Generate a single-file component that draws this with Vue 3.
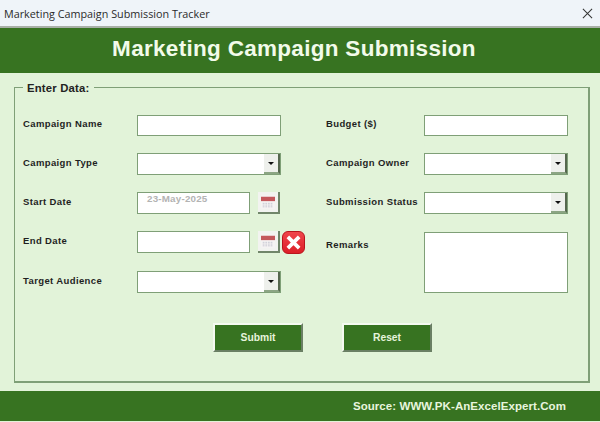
<script setup>
// Marketing campaign submission form
const leftRows = [
  { label: 'Campaign Name', type: 'text' },
  { label: 'Campaign Type', type: 'select' },
  { label: 'Start Date', type: 'date', value: '23-May-2025' },
  { label: 'End Date', type: 'date', clear: true },
  { label: 'Target Audience', type: 'select' }
]
const rightRows = [
  { label: 'Budget ($)', type: 'text' },
  { label: 'Campaign Owner', type: 'select' },
  { label: 'Submission Status', type: 'select' }
]
</script>

<template>
  <div class="window">
    <div class="titlebar">
      <span class="title-text">Marketing Campaign Submission Tracker</span>
      <svg class="close-icon" viewBox="0 0 12 12" fill="none">
        <path d="M1 1L11 11M11 1L1 11" stroke="#333" stroke-width="1.1"/>
      </svg>
    </div>

    <header class="banner">Marketing Campaign Submission</header>

    <main class="body">
      <fieldset class="panel">
        <legend class="panel-legend">Enter Data:</legend>

        <div class="columns">
          <div class="col col-left">
            <div v-for="row in leftRows" :key="row.label" class="row">
              <label class="field-label">{{ row.label }}</label>

              <div v-if="row.type === 'text'" class="box"></div>

              <div v-else-if="row.type === 'select'" class="box box-select">
                <span class="drop"><i class="arrow"></i></span>
              </div>

              <div v-else class="date-wrap">
                <div class="box box-date">{{ row.value }}</div>
                <span class="cal-btn">
                  <svg viewBox="0 0 18 16" class="cal-icon">
                    <rect x="1" y="0" width="16" height="16" rx="1" fill="#f5f3f3"/>
                    <rect x="1" y="2" width="16" height="5" fill="#c4575c"/>
                    <path d="M3 9.5h12M3 11.5h12M3 13.5h12" stroke="#c5c5d0" stroke-width="1" stroke-dasharray="2 1"/>
                  </svg>
                </span>
                <span v-if="row.clear" class="clear-btn">
                  <svg viewBox="0 0 12 12" class="clear-icon">
                    <path d="M2 2L10 10M10 2L2 10" stroke="#fff" stroke-width="2.6"/>
                  </svg>
                </span>
              </div>
            </div>
          </div>

          <div class="col col-right">
            <div v-for="row in rightRows" :key="row.label" class="row">
              <label class="field-label wide">{{ row.label }}</label>
              <div v-if="row.type === 'text'" class="box"></div>
              <div v-else class="box box-select">
                <span class="drop"><i class="arrow"></i></span>
              </div>
            </div>
            <div class="row row-remarks">
              <label class="field-label wide">Remarks</label>
              <div class="box box-remarks"></div>
            </div>
          </div>
        </div>

        <div class="actions">
          <button class="btn">Submit</button>
          <button class="btn">Reset</button>
        </div>
      </fieldset>
    </main>

    <footer class="footer">Source: WWW.PK-AnExcelExpert.Com</footer>
  </div>
</template>

<style>
html, body {
  margin: 0;
  background: #e2f3d9;
}
</style>

<style scoped>
.window {
  width: 600px;
  height: 422px;
  display: flex;
  flex-direction: column;
  font-family: 'Liberation Sans', Arial, sans-serif;
  background: #e2f3d9;
  overflow: hidden;
}

.titlebar {
  height: 26px;
  flex-shrink: 0;
  display: flex;
  align-items: center;
  justify-content: space-between;
  padding: 0 7px 0 4px;
  background: #eff4f9;
  border-bottom: 2px solid #a9b0a8;
  box-sizing: content-box;
}

.title-text {
  font-family: 'Open Sans', sans-serif;
  font-size: 10.8px;
  color: #2b2b2b;
}

.close-icon {
  width: 11px;
  height: 11px;
}

.banner {
  height: 45px;
  flex-shrink: 0;
  display: flex;
  align-items: center;
  justify-content: center;
  background: #377321;
  color: #f2fbea;
  font-size: 22.5px;
  font-weight: 700;
  letter-spacing: 0.3px;
  padding: 0 12px 3px 0;
  box-sizing: border-box;
}

.body {
  flex: 1;
  padding: 7px 10px 8px 14px;
  display: flex;
  min-height: 0;
}

.panel {
  flex: 1;
  margin: 0;
  padding: 0 8px;
  min-width: 0;
  border: 1px solid #7f9f77;
  border-right-width: 2px;
  border-bottom-width: 2px;
  display: block;
}

.panel-legend {
  margin-left: 0;
  padding: 1px 5px 0 4px;
  font-size: 11.3px;
  font-weight: 700;
  color: #222;
  letter-spacing: 0.2px;
  line-height: 14px;
}

.columns {
  display: flex;
  margin-top: 20px;
}

.col {
  display: flex;
  flex-direction: column;
  gap: 17px;
}

.col-left {
  width: 303px;
}

.row {
  display: flex;
  align-items: center;
  height: 22px;
}

/* the first row is a pixel shorter, the last one sits a pixel lower */
.row:first-child {
  height: 21px;
}

.col-left .row:last-child {
  margin-top: 1px;
}

.row-remarks {
  height: 61px;
  margin-top: 1px;
  align-items: flex-start;
}

.field-label {
  width: 114px;
  flex-shrink: 0;
  padding-bottom: 4px;
  font-size: 9.5px;
  font-weight: 700;
  letter-spacing: 0.38px;
  color: #1f1f1f;
}

.field-label.wide {
  width: 98px;
}

.row-remarks .field-label {
  padding-top: 7px;
}

.box {
  width: 144px;
  height: 100%;
  box-sizing: border-box;
  background: #fff;
  border: 1px solid #7f9f77;
  flex-shrink: 0;
}

.box-select {
  display: flex;
  justify-content: flex-end;
}

.drop {
  width: 16px;
  height: 100%;
  display: flex;
  align-items: center;
  justify-content: center;
  background: #eef0ec;
  border-right: 2px solid #55674e;
  border-bottom: 2px solid #8ca584;
  box-sizing: border-box;
}

.arrow {
  width: 0;
  height: 0;
  border-left: 3px solid transparent;
  border-right: 3px solid transparent;
  border-top: 3px solid #111;
}

.date-wrap {
  display: flex;
  align-items: center;
  height: 100%;
}

.box-date {
  width: 113px;
  padding-left: 9px;
  font-size: 9.8px;
  font-weight: 700;
  line-height: 12px;
  color: #b3b3b3;
  letter-spacing: 0.2px;
}

.cal-btn {
  width: 22px;
  height: 22px;
  margin-left: 8px;
  box-sizing: border-box;
  display: flex;
  align-items: center;
  justify-content: center;
  background: #f2f3f0;
  border-right: 2px solid #71866a;
  border-bottom: 2px solid #71866a;
}

.cal-icon {
  width: 16px;
  height: 14px;
}

.clear-btn {
  width: 23px;
  height: 23px;
  margin-left: 2px;
  display: flex;
  align-items: center;
  justify-content: center;
  background: linear-gradient(#f0464c, #dc1f28);
  border: 1px solid #b9141d;
  border-radius: 6px;
  box-sizing: border-box;
}

.clear-icon {
  width: 17px;
  height: 17px;
}

.box-remarks {
  height: 61px;
}

.actions {
  display: flex;
  justify-content: flex-start;
  gap: 39px;
  margin-top: 30px;
  padding-left: 190px;
}

.btn {
  width: 90px;
  height: 29px;
  padding: 0;
  background: #377321;
  color: #e6f3dc;
  font-family: inherit;
  font-size: 10.3px;
  font-weight: 700;
  border: 0;
  border-left: 2px solid #f4faf0;
  border-top: 2px solid #f4faf0;
  border-right: 2px solid #6a7f64;
  border-bottom: 2px solid #6a7f64;
}

.footer {
  height: 30px;
  flex-shrink: 0;
  margin-bottom: 1px;
  display: flex;
  align-items: center;
  justify-content: flex-end;
  padding-right: 34px;
  background: #377321;
  color: #e8f5de;
  font-size: 11.5px;
  font-weight: 700;
  letter-spacing: 0.07px;
}
</style>
